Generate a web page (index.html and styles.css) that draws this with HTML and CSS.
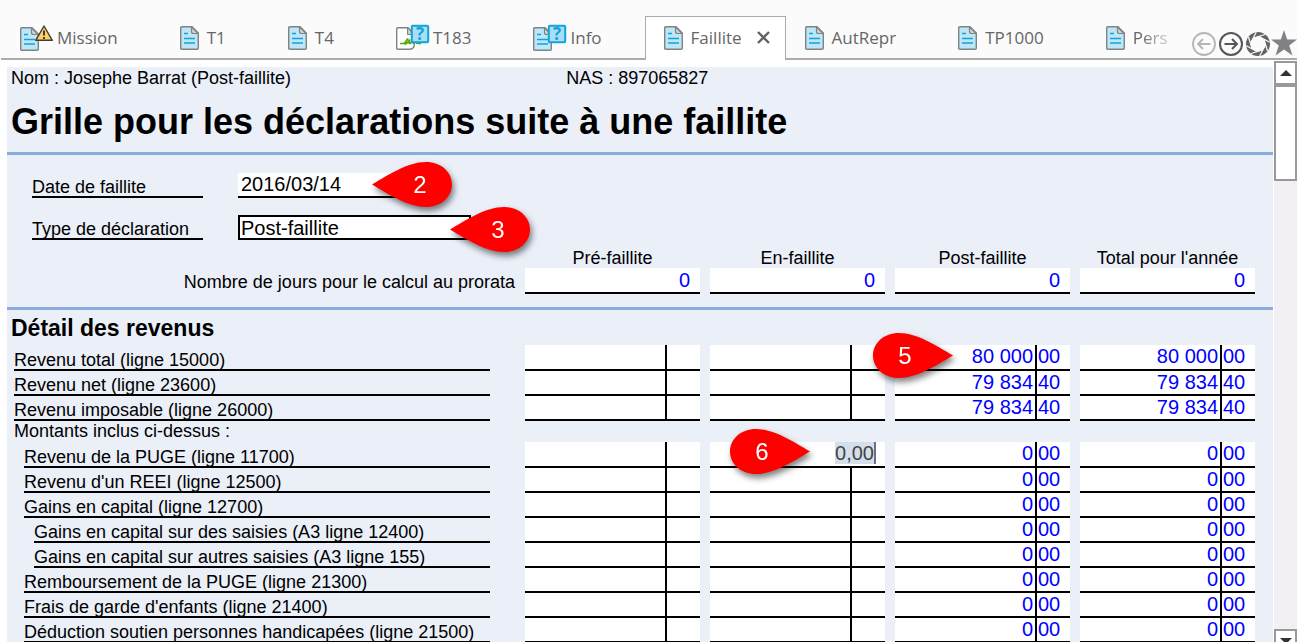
FILE: index.html
```html
<!DOCTYPE html>
<html lang="fr">
<head>
    <meta charset="UTF-8">
    <meta name="viewport" content="width=device-width, initial-scale=1.0">
    <title>Grille pour les déclarations suite à une faillite</title>
    <link rel="stylesheet" href="styles.css">
</head>
<body>
    <!-- shared icons -->
    <svg class="symbols" aria-hidden="true">
        <symbol id="doc" viewBox="0 0 19 24">
            <path d="M1.8 .7H12L18.3 7V22.2Q18.3 23.3 17.2 23.3H1.8Q.7 23.3 .7 22.2V1.8Q.7 .7 1.8 .7Z" fill="#bde6f6" stroke="#7f8385" stroke-width="1.4"/>
            <path d="M11.5 1V5.5Q11.5 7.5 13.5 7.5H18Z" fill="#cfd6da" stroke="#7f8385" stroke-width="1.2"/>
            <path d="M4 7.5H8M4 12.5H15M4 17H15" stroke="#12a3dc" stroke-width="1.5"/>
        </symbol>
        <symbol id="pin-left" viewBox="0 0 80 45">
            <path d="M0 22.5C16 13 36 0 54 0C69 0 80 10 80 22.5C80 35 69 45 54 45C36 45 16 32 0 22.5Z" fill="#f00"/>
        </symbol>
        <symbol id="pin-right" viewBox="0 0 80 45">
            <path d="M80 22.5C64 13 44 0 26 0C11 0 0 10 0 22.5C0 35 11 45 26 45C44 45 64 32 80 22.5Z" fill="#f00"/>
        </symbol>
    </svg>

    <header class="tab-bar">
        <nav class="tabs">
            <div class="tab">
                <button type="button" class="tab-btn badged">
                    <svg width="34" height="28" viewBox="0 0 34 28">
                        <use href="#doc" x="0" y="3" width="19" height="24"/>
                        <path d="M24 2L32.3 16.3H15.7Z" fill="#fbd068" stroke="#443c2c" stroke-width="1.4" stroke-linejoin="round"/>
                        <path d="M24 6.5V11.5M24 13V15" stroke="#443c2c" stroke-width="2"/>
                    </svg>
                    Mission
                </button>
            </div>
            <div class="tab">
                <button type="button" class="tab-btn"><svg width="19" height="24"><use href="#doc"/></svg>T1</button>
            </div>
            <div class="tab">
                <button type="button" class="tab-btn"><svg width="19" height="24"><use href="#doc"/></svg>T4</button>
            </div>
            <div class="tab">
                <button type="button" class="tab-btn badged">
                    <svg width="34" height="28" viewBox="0 0 34 28">
                        <path d="M1.8 3.7H12L18.3 10V20Q18.3 25.3 13 25.3H1.8Q.7 25.3 .7 24.2V4.8Q.7 3.7 1.8 3.7Z" fill="#fff" stroke="#7f8385" stroke-width="1.4"/>
                        <path d="M11.5 4V10.5H18Z" fill="#c5d3b4" stroke="#7f8385"/>
                        <path d="M4 19.5H8Q11 17 12 14.5Q9 18 9.5 20Q12 19 14 15.5Q12 19.5 14 19.5Q16 18 17 16Q16 19.5 18 19.5Q20 17 21 17Q20 19.5 22 19.5H25" fill="none" stroke="#56a60c" stroke-width="1.7"/>
                        <rect x="15.8" y="1.8" width="16.4" height="16.4" rx="1" class="help-box"/>
                        <text x="24" y="16" class="help-mark">?</text>
                    </svg>
                    T183
                </button>
            </div>
            <div class="tab">
                <button type="button" class="tab-btn badged">
                    <svg width="34" height="28" viewBox="0 0 34 28">
                        <use href="#doc" x="0" y="3" width="19" height="24"/>
                        <rect x="15.8" y="1.8" width="16.4" height="16.4" rx="1" class="help-box"/>
                        <text x="24" y="16" class="help-mark">?</text>
                    </svg>
                    Info
                </button>
            </div>
            <div class="tab active">
                <button type="button" class="tab-btn"><svg width="19" height="24"><use href="#doc"/></svg>Faillite</button>
                <button type="button" class="close" aria-label="Fermer">
                    <svg width="13" height="13" viewBox="0 0 13 13"><path d="M1 1L12 12M12 1L1 12" stroke="#626262" stroke-width="2.4"/></svg>
                </button>
            </div>
            <div class="tab">
                <button type="button" class="tab-btn"><svg width="19" height="24"><use href="#doc"/></svg>AutRepr</button>
            </div>
            <div class="tab">
                <button type="button" class="tab-btn"><svg width="19" height="24"><use href="#doc"/></svg>TP1000</button>
            </div>
            <div class="tab last">
                <button type="button" class="tab-btn"><svg width="19" height="24"><use href="#doc"/></svg><span class="fade">Pers</span></button>
            </div>
        </nav>
        <div class="tools">
            <button type="button" aria-label="Précédent" disabled>
                <svg width="24" height="24" viewBox="0 0 24 24" fill="none" stroke="#b5b5b5" stroke-width="1.8"><circle cx="12" cy="12" r="11"/><path d="M18.5 12H6M11 7L6 12L11 17"/></svg>
            </button>
            <button type="button" aria-label="Suivant">
                <svg width="24" height="24" viewBox="0 0 24 24" fill="none" stroke="#55555a" stroke-width="2"><circle cx="12" cy="12" r="11"/><path d="M5.5 12H18M13 7L18 12L13 17"/></svg>
            </button>
            <button type="button" aria-label="Affichage">
                <svg width="24" height="24" viewBox="0 0 24 24">
                    <circle cx="12" cy="12" r="9.7" fill="none" stroke="#626467" stroke-width="4.6"/>
                    <g stroke="#fbfbfb" stroke-width="1.2">
                        <path id="blade" d="M7.5 6L19 2.5"/>
                        <use href="#blade" transform="rotate(45 12 12)"/>
                        <use href="#blade" transform="rotate(90 12 12)"/>
                        <use href="#blade" transform="rotate(135 12 12)"/>
                        <use href="#blade" transform="rotate(180 12 12)"/>
                        <use href="#blade" transform="rotate(225 12 12)"/>
                        <use href="#blade" transform="rotate(270 12 12)"/>
                        <use href="#blade" transform="rotate(315 12 12)"/>
                    </g>
                </svg>
            </button>
            <button type="button" class="star" aria-label="Favoris">
                <svg width="26" height="26" viewBox="0 0 26 26"><path d="M13 0L16.2 9.5H26L18.2 15.5L21.5 25.5L13 19.5L4.5 25.5L7.8 15.5L0 9.5H9.8Z" fill="#808285"/></svg>
            </button>
        </div>
    </header>

    <div class="pane">
        <main class="form">
            <div class="form-head">
                <div class="client">
                    <span class="client-name">Nom : Josephe Barrat (Post-faillite)</span>
                    <span>NAS : 897065827</span>
                </div>
                <h1>Grille pour les déclarations suite à une faillite</h1>
            </div>

            <section class="general">
                <div class="fields">
                    <div class="field">
                        <label for="date">Date de faillite</label>
                        <div class="control date">
                            <input type="text" id="date" value="2016/03/14">
                            <svg class="pin pin-date" width="80" height="45"><use href="#pin-left"/><text x="48" y="31">2</text></svg>
                        </div>
                    </div>
                    <div class="field">
                        <label for="type">Type de déclaration</label>
                        <div class="control type">
                            <select id="type">
                                <option>Post-faillite</option>
                            </select>
                            <svg class="pin pin-type" width="80" height="45"><use href="#pin-left"/><text x="48" y="31">3</text></svg>
                        </div>
                    </div>
                </div>

                <table class="grid">
                    <colgroup><col><col class="value"><col class="value"><col class="value"><col class="value"></colgroup>
                    <thead>
                        <tr>
                            <td></td>
                            <th scope="col">Pré-faillite</th>
                            <th scope="col">En-faillite</th>
                            <th scope="col">Post-faillite</th>
                            <th scope="col">Total pour l'année</th>
                        </tr>
                    </thead>
                    <tbody>
                        <tr class="first">
                            <th scope="row" class="days-label">Nombre de jours pour le calcul au prorata</th>
                            <td><div class="days"><input type="text" value="0" aria-label="Jours pré-faillite"></div></td>
                            <td><div class="days"><input type="text" value="0" aria-label="Jours en-faillite"></div></td>
                            <td><div class="days"><input type="text" value="0" aria-label="Jours post-faillite"></div></td>
                            <td><div class="days">0</div></td>
                        </tr>
                    </tbody>
                </table>
            </section>

            <section>
                <h2>Détail des revenus</h2>
                <table class="grid">
                    <colgroup><col><col class="value"><col class="value"><col class="value"><col class="value"></colgroup>
                    <tbody>
                        <tr class="first">
                            <th scope="row"><div class="line">Revenu total (ligne 15000)</div></th>
                            <td><div class="amount"><input type="text" aria-label="Revenu total, pré-faillite"></div></td>
                            <td><div class="amount"><input type="text" aria-label="Revenu total, en-faillite"></div></td>
                            <td>
                                <div class="amount"><span class="int">80 000</span><span class="dec">00</span></div>
                                <svg class="pin pin-total" width="80" height="45"><use href="#pin-right"/><text x="32" y="31">5</text></svg>
                            </td>
                            <td><div class="amount"><span class="int">80 000</span><span class="dec">00</span></div></td>
                        </tr>
                        <tr>
                            <th scope="row"><div class="line">Revenu net (ligne 23600)</div></th>
                            <td><div class="amount"><input type="text" aria-label="Revenu net, pré-faillite"></div></td>
                            <td><div class="amount"><input type="text" aria-label="Revenu net, en-faillite"></div></td>
                            <td><div class="amount"><span class="int">79 834</span><span class="dec">40</span></div></td>
                            <td><div class="amount"><span class="int">79 834</span><span class="dec">40</span></div></td>
                        </tr>
                        <tr>
                            <th scope="row"><div class="line">Revenu imposable (ligne 26000)</div></th>
                            <td><div class="amount"><input type="text" aria-label="Revenu imposable, pré-faillite"></div></td>
                            <td><div class="amount"><input type="text" aria-label="Revenu imposable, en-faillite"></div></td>
                            <td><div class="amount"><span class="int">79 834</span><span class="dec">40</span></div></td>
                            <td><div class="amount"><span class="int">79 834</span><span class="dec">40</span></div></td>
                        </tr>
                        <tr class="note">
                            <th colspan="5">Montants inclus ci-dessus :</th>
                        </tr>
                        <tr class="first">
                            <th scope="row" class="sub"><div class="line">Revenu de la PUGE (ligne 11700)</div></th>
                            <td><div class="amount"><input type="text" aria-label="PUGE, pré-faillite"></div></td>
                            <td>
                                <div class="amount editing"><input type="text" value="0,00" aria-label="PUGE, en-faillite"></div>
                                <svg class="pin pin-edit" width="80" height="45"><use href="#pin-right"/><text x="32" y="31">6</text></svg>
                            </td>
                            <td><div class="amount"><span class="int">0</span><span class="dec">00</span></div></td>
                            <td><div class="amount"><span class="int">0</span><span class="dec">00</span></div></td>
                        </tr>
                        <tr>
                            <th scope="row" class="sub"><div class="line">Revenu d'un REEI (ligne 12500)</div></th>
                            <td><div class="amount"><input type="text" aria-label="REEI, pré-faillite"></div></td>
                            <td><div class="amount"><input type="text" aria-label="REEI, en-faillite"></div></td>
                            <td><div class="amount"><span class="int">0</span><span class="dec">00</span></div></td>
                            <td><div class="amount"><span class="int">0</span><span class="dec">00</span></div></td>
                        </tr>
                        <tr>
                            <th scope="row" class="sub"><div class="line">Gains en capital (ligne 12700)</div></th>
                            <td><div class="amount"><input type="text" aria-label="Gains en capital, pré-faillite"></div></td>
                            <td><div class="amount"><input type="text" aria-label="Gains en capital, en-faillite"></div></td>
                            <td><div class="amount"><span class="int">0</span><span class="dec">00</span></div></td>
                            <td><div class="amount"><span class="int">0</span><span class="dec">00</span></div></td>
                        </tr>
                        <tr>
                            <th scope="row" class="subsub"><div class="line">Gains en capital sur des saisies (A3 ligne 12400)</div></th>
                            <td><div class="amount"><input type="text" aria-label="Gains sur des saisies, pré-faillite"></div></td>
                            <td><div class="amount"><input type="text" aria-label="Gains sur des saisies, en-faillite"></div></td>
                            <td><div class="amount"><span class="int">0</span><span class="dec">00</span></div></td>
                            <td><div class="amount"><span class="int">0</span><span class="dec">00</span></div></td>
                        </tr>
                        <tr>
                            <th scope="row" class="subsub"><div class="line">Gains en capital sur autres saisies (A3 ligne 155)</div></th>
                            <td><div class="amount"><input type="text" aria-label="Gains sur autres saisies, pré-faillite"></div></td>
                            <td><div class="amount"><input type="text" aria-label="Gains sur autres saisies, en-faillite"></div></td>
                            <td><div class="amount"><span class="int">0</span><span class="dec">00</span></div></td>
                            <td><div class="amount"><span class="int">0</span><span class="dec">00</span></div></td>
                        </tr>
                        <tr>
                            <th scope="row" class="sub"><div class="line">Remboursement de la PUGE (ligne 21300)</div></th>
                            <td><div class="amount"><input type="text" aria-label="Remboursement PUGE, pré-faillite"></div></td>
                            <td><div class="amount"><input type="text" aria-label="Remboursement PUGE, en-faillite"></div></td>
                            <td><div class="amount"><span class="int">0</span><span class="dec">00</span></div></td>
                            <td><div class="amount"><span class="int">0</span><span class="dec">00</span></div></td>
                        </tr>
                        <tr>
                            <th scope="row" class="sub"><div class="line">Frais de garde d'enfants (ligne 21400)</div></th>
                            <td><div class="amount"><input type="text" aria-label="Frais de garde, pré-faillite"></div></td>
                            <td><div class="amount"><input type="text" aria-label="Frais de garde, en-faillite"></div></td>
                            <td><div class="amount"><span class="int">0</span><span class="dec">00</span></div></td>
                            <td><div class="amount"><span class="int">0</span><span class="dec">00</span></div></td>
                        </tr>
                        <tr>
                            <th scope="row" class="sub"><div class="line">Déduction soutien personnes handicapées (ligne 21500)</div></th>
                            <td><div class="amount"><input type="text" aria-label="Déduction soutien, pré-faillite"></div></td>
                            <td><div class="amount"><input type="text" aria-label="Déduction soutien, en-faillite"></div></td>
                            <td><div class="amount"><span class="int">0</span><span class="dec">00</span></div></td>
                            <td><div class="amount"><span class="int">0</span><span class="dec">00</span></div></td>
                        </tr>
                    </tbody>
                </table>
            </section>
        </main>

        <div class="scrollbar">
            <button type="button" aria-label="Défiler vers le haut"><svg width="12" height="6"><path d="M0 6L6 0L12 6Z" fill="#333"/></svg></button>
            <div class="thumb"></div>
            <button type="button" class="down" aria-label="Défiler vers le bas"><svg width="12" height="6"><path d="M0 0H12L6 6Z" fill="#333"/></svg></button>
        </div>
    </div>
</body>
</html>
```
FILE: styles.css
```css
* {
    box-sizing: border-box;
}
body {
    margin: 0;
    height: 100vh;
    display: flex;
    flex-direction: column;
    overflow: hidden;
    background: white;
    color: #000;
    font-family: "Liberation Sans", Arial, sans-serif;
    font-size: 18px;
}
button, input, select {
    font: inherit;
    color: inherit;
    border: none;
    background: none;
    padding: 0;
    margin: 0;
}
svg {
    display: block;
    flex-shrink: 0;
}
.symbols {
    position: absolute;
    width: 0;
    height: 0;
}

/* tabs */
.tab-bar {
    display: flex;
    align-items: flex-end;
    flex-shrink: 0;
    padding: 16px 0 0 1px;
    background: #fbfbfb;
}
.tabs {
    display: flex;
    flex: 1;
    min-width: 0;
    overflow: hidden;
}
.tab {
    display: flex;
    align-items: center;
    flex-shrink: 0;
    height: 44px;
    padding: 1px 43px 0 19px;
    border-bottom: 2px solid #ababab;
}
.tab.active {
    padding: 0 15px 2px 18px;
    background: white;
    border: 1px solid #ababab;
    border-bottom: none;
}
.tab.last {
    flex: 1;
    padding-right: 0;
}
.tab-btn {
    display: flex;
    align-items: center;
    gap: 8px;
    font-family: "Open Sans", sans-serif;
    font-size: 17px;
    line-height: 24px;
    color: #666;
}
.tab-btn.badged {
    gap: 3px;
}
.help-box {
    fill: #a9def4;
    stroke: #12a3dc;
    stroke-width: 2;
}
.help-mark {
    font-family: "Open Sans", sans-serif;
    font-size: 17px;
    font-weight: bold;
    text-anchor: middle;
    fill: #12a3dc;
}
.fade {
    mask-image: linear-gradient(to right, #000 20%, transparent 130%);
}
.close {
    margin-left: 15px;
}
.tools {
    display: flex;
    align-items: flex-end;
    gap: 3px;
    height: 44px;
    padding-bottom: 2px;
    border-bottom: 2px solid #ababab;
}
.tools .star {
    margin-left: -2px;
}

/* form */
.pane {
    display: flex;
    flex: 1;
    min-height: 0;
}
.form {
    flex: 1;
    min-width: 0;
    overflow: hidden;
    margin: 7px 1px 0 7px;
    background: #eaeff8;
}
.form-head, .general {
    border-bottom: 3px solid #8aaddd;
}
.form-head {
    padding-left: 4px;
}
.client {
    display: flex;
    line-height: 22px;
}
.client-name {
    width: 44%;
}
h1 {
    margin: 0;
    padding-top: 2px;
    font-size: 36px;
    line-height: 61px;
}
h2 {
    margin: 0;
    padding: 2px 0 0 4px;
    font-size: 23px;
    line-height: 33px;
}
.general {
    padding: 18px 0 13px;
}
.fields {
    display: flex;
    flex-direction: column;
    gap: 17px;
    padding-left: 25px;
}
.field {
    display: flex;
    gap: 35px;
    height: 25px;
}
.field label {
    width: 171px;
    padding-top: 5px;
    line-height: 19px;
    border-bottom: 2px solid #000;
}
.control {
    position: relative;
    font-size: 20px;
    background: white;
}
.control input, .control select {
    display: block;
    width: 100%;
    height: 100%;
    appearance: none;
}
.control select {
    padding-bottom: 3px;
}
.date {
    width: 175px;
    padding-left: 3px;
    border-bottom: 2px solid #000;
}
.type {
    width: 233px;
    padding-left: 1px;
    border: 2px solid #000;
}

/* numbered markers over the form */
.pin {
    position: absolute;
    z-index: 1;
    overflow: visible;
    filter: drop-shadow(2px 4px 3px rgba(0, 0, 0, 0.5));
}
.pin text {
    font-size: 24px;
    text-anchor: middle;
    fill: white;
}
.pin-date {
    left: 134px;
    top: -11px;
}
.pin-type {
    left: 210px;
    top: -10px;
}
.pin-total {
    left: -12px;
    top: -12px;
}
.pin-edit {
    left: 30px;
    top: -13px;
}

/* amounts */
.grid {
    width: calc(100% - 18px);
    table-layout: fixed;
    border-collapse: collapse;
}
.value {
    width: 185px;
}
.grid th {
    font-weight: normal;
}
.grid td, .grid th {
    position: relative;
    padding: 0 0 0 10px;
}
.grid thead th {
    height: 28px;
    line-height: 20px;
    vertical-align: bottom;
}
.grid tbody th {
    padding: 0 25px 0 7px;
    text-align: left;
    vertical-align: bottom;
}
.grid tbody .sub {
    padding-left: 17px;
}
.grid tbody .subsub {
    padding-left: 27px;
}
.grid tbody .days-label {
    padding: 0 0 2px;
    text-align: right;
    line-height: 19px;
}
.line {
    height: 25px;
    padding-top: 5px;
    line-height: 19px;
    white-space: nowrap;
    border-bottom: 2px solid #000;
}
.note th {
    height: 21px;
    line-height: 21px;
}
.amount, .days {
    height: 25px;
    font-size: 20px;
    line-height: 22px;
    color: #00f;
    border-bottom: 2px solid #000;
    background: white;
}
.first .amount, .first .days {
    height: 26px;
}
.amount {
    display: flex;
    background: linear-gradient(#000, #000) 140px 0 / 2px 100% no-repeat white;
}
.amount input, .days input {
    display: block;
    width: 100%;
    height: 22px;
    text-align: right;
}
.int {
    width: 140px;
    padding-right: 2px;
    text-align: right;
}
.dec {
    padding-left: 3px;
}
.days {
    padding-right: 10px;
    text-align: right;
    line-height: 24px;
}
.days input {
    height: 24px;
}
.amount.editing {
    justify-content: flex-end;
    padding-right: 9px;
    color: #444;
    background: white;
}
.editing input {
    width: 41px;
    background: #d3dfea;
    border-right: 2px solid #6c737a;
}

/* scrollbar */
.scrollbar {
    display: flex;
    flex-direction: column;
    width: 23px;
    margin: 1px 0 -11px;
    background: #f4eff5;
}
.scrollbar button {
    display: flex;
    align-items: center;
    justify-content: center;
    height: 24px;
    flex-shrink: 0;
    border: 2px solid #999;
    background: white;
}
.thumb {
    height: 96px;
    border: 2px solid #999;
    background: white;
}
.scrollbar .down {
    margin-top: auto;
}
```
